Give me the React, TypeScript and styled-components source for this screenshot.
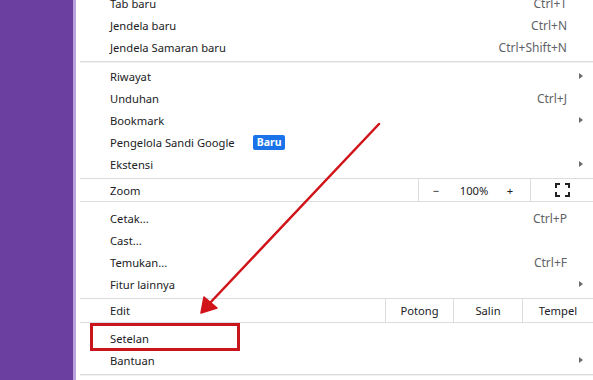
import React from 'react';
import styled, { createGlobalStyle } from 'styled-components';

const GlobalStyle = createGlobalStyle`
  *, *::before, *::after {
    box-sizing: border-box;
  }
  html, body {
    margin: 0;
    padding: 0;
    background: #ffffff;
    overflow: hidden;
  }
`;

const Page = styled.div`
  position: relative;
  width: 593px;
  height: 380px;
  overflow: hidden;
  display: flex;
  font-family: 'Noto Sans', 'Open Sans', sans-serif;
  font-size: 11.2px;
  color: #202124;
`;

const Sidebar = styled.div`
  width: 76px;
  flex-shrink: 0;
  background: #6b3fa0;
  border-right: 3px solid #b9a3da;
`;

const Menu = styled.div`
  flex: 1;
  margin-top: -8px;
  display: flex;
  flex-direction: column;
`;

const Row = styled.div`
  height: 22px;
  display: flex;
  align-items: center;
  padding: 0 10px 0 34px;
`;

const Label = styled.span`
  white-space: nowrap;
`;

const Shortcut = styled.span`
  margin-left: auto;
  margin-right: 16px;
  color: #5f6368;
  font-size: 12px;
  white-space: nowrap;
`;

const SubArrow = styled.span`
  margin-left: auto;
  width: 0;
  height: 0;
  border-left: 4px solid #6b6b6b;
  border-top: 3.5px solid transparent;
  border-bottom: 3.5px solid transparent;
`;

const Badge = styled.span`
  margin-left: 18px;
  background: #1a73e8;
  color: #ffffff;
  font-weight: 700;
  font-size: 10.5px;
  line-height: 15px;
  padding: 0 4px;
  border-radius: 2px;
`;

const Separator = styled.div<{ $below: number }>`
  height: 1px;
  margin: 3px 0 ${({ $below }) => $below}px 4px;
  background: #dadce0;
  box-shadow: 0 1px 0 #f3f3f3;
`;

const SplitRow = styled.div<{ $height: number; $below: number }>`
  height: ${({ $height }) => $height}px;
  display: flex;
  align-items: stretch;
  margin: 3px 0 ${({ $below }) => $below}px 4px;
  border-top: 1px solid #dadce0;
  border-bottom: 1px solid #dadce0;
`;

const SplitLabel = styled.div`
  flex: 1;
  display: flex;
  align-items: center;
  padding-left: 30px;
`;

const Cell = styled.div<{ $width: number }>`
  width: ${({ $width }) => $width}px;
  display: flex;
  align-items: center;
  justify-content: center;
  border-left: 1px solid #dadce0;
  white-space: nowrap;
`;

const ZoomGroup = styled.div`
  width: 112px;
  display: flex;
  align-items: center;
  border-left: 1px solid #dadce0;
  padding-right: 5px;
`;

const ZoomPart = styled.span<{ $width: number }>`
  width: ${({ $width }) => $width}px;
  text-align: center;
`;

const Overlay = styled.svg`
  position: absolute;
  left: 0;
  top: 0;
  pointer-events: none;
`;

const Highlight = styled.div`
  position: absolute;
  left: 90px;
  top: 323px;
  width: 150px;
  height: 28px;
  border: 3px solid #c8161d;
  pointer-events: none;
`;

const FullscreenIcon = () => (
  <svg width="15" height="14" viewBox="0 0 15 14">
    <path
      d="M1 5V1h4M10 1h4v4M14 9v4h-4M5 13H1V9"
      fill="none"
      stroke="#202124"
      strokeWidth="2"
    />
  </svg>
);

type Item = { label: string; shortcut?: string; sub?: boolean; badge?: string };

const renderRow = (item: Item) => (
  <Row key={item.label}>
    <Label>{item.label}</Label>
    {item.badge && <Badge>{item.badge}</Badge>}
    {item.shortcut && <Shortcut>{item.shortcut}</Shortcut>}
    {item.sub && <SubArrow />}
  </Row>
);

const group1: Item[] = [
  { label: 'Tab baru', shortcut: 'Ctrl+T' },
  { label: 'Jendela baru', shortcut: 'Ctrl+N' },
  { label: 'Jendela Samaran baru', shortcut: 'Ctrl+Shift+N' },
];

const group2: Item[] = [
  { label: 'Riwayat', sub: true },
  { label: 'Unduhan', shortcut: 'Ctrl+J' },
  { label: 'Bookmark', sub: true },
  { label: 'Pengelola Sandi Google', badge: 'Baru' },
  { label: 'Ekstensi', sub: true },
];

const group3: Item[] = [
  { label: 'Cetak...', shortcut: 'Ctrl+P' },
  { label: 'Cast...' },
  { label: 'Temukan...', shortcut: 'Ctrl+F' },
  { label: 'Fitur lainnya', sub: true },
];

const group4: Item[] = [
  { label: 'Setelan' },
  { label: 'Bantuan', sub: true },
];

export default function App() {
  return (
    <>
      <GlobalStyle />
      <Page>
        <Sidebar />
        <Menu>
          {group1.map(renderRow)}
          <Separator $below={3} />
          {group2.map(renderRow)}
          <SplitRow $height={24} $below={5}>
            <SplitLabel>Zoom</SplitLabel>
            <ZoomGroup>
              <ZoomPart $width={34}>−</ZoomPart>
              <ZoomPart $width={42}>100%</ZoomPart>
              <ZoomPart $width={30}>+</ZoomPart>
            </ZoomGroup>
            <Cell $width={63}>
              <FullscreenIcon />
            </Cell>
          </SplitRow>
          {group3.map(renderRow)}
          <SplitRow $height={25} $below={4}>
            <SplitLabel>Edit</SplitLabel>
            <Cell $width={68}>Potong</Cell>
            <Cell $width={69}>Salin</Cell>
            <Cell $width={71}>Tempel</Cell>
          </SplitRow>
          {group4.map(renderRow)}
          <Separator $below={0} />
        </Menu>
        <Highlight />
        <Overlay width="593" height="380" viewBox="0 0 593 380">
          <line x1="379" y1="124" x2="209" y2="304" stroke="#d0141a" strokeWidth="2.5" strokeLinecap="round" />
          <path d="M201 313 L204 297 L217 308 Z" fill="#d0141a" stroke="#d0141a" strokeWidth="1.5" strokeLinejoin="round" />
        </Overlay>
      </Page>
    </>
  );
}
